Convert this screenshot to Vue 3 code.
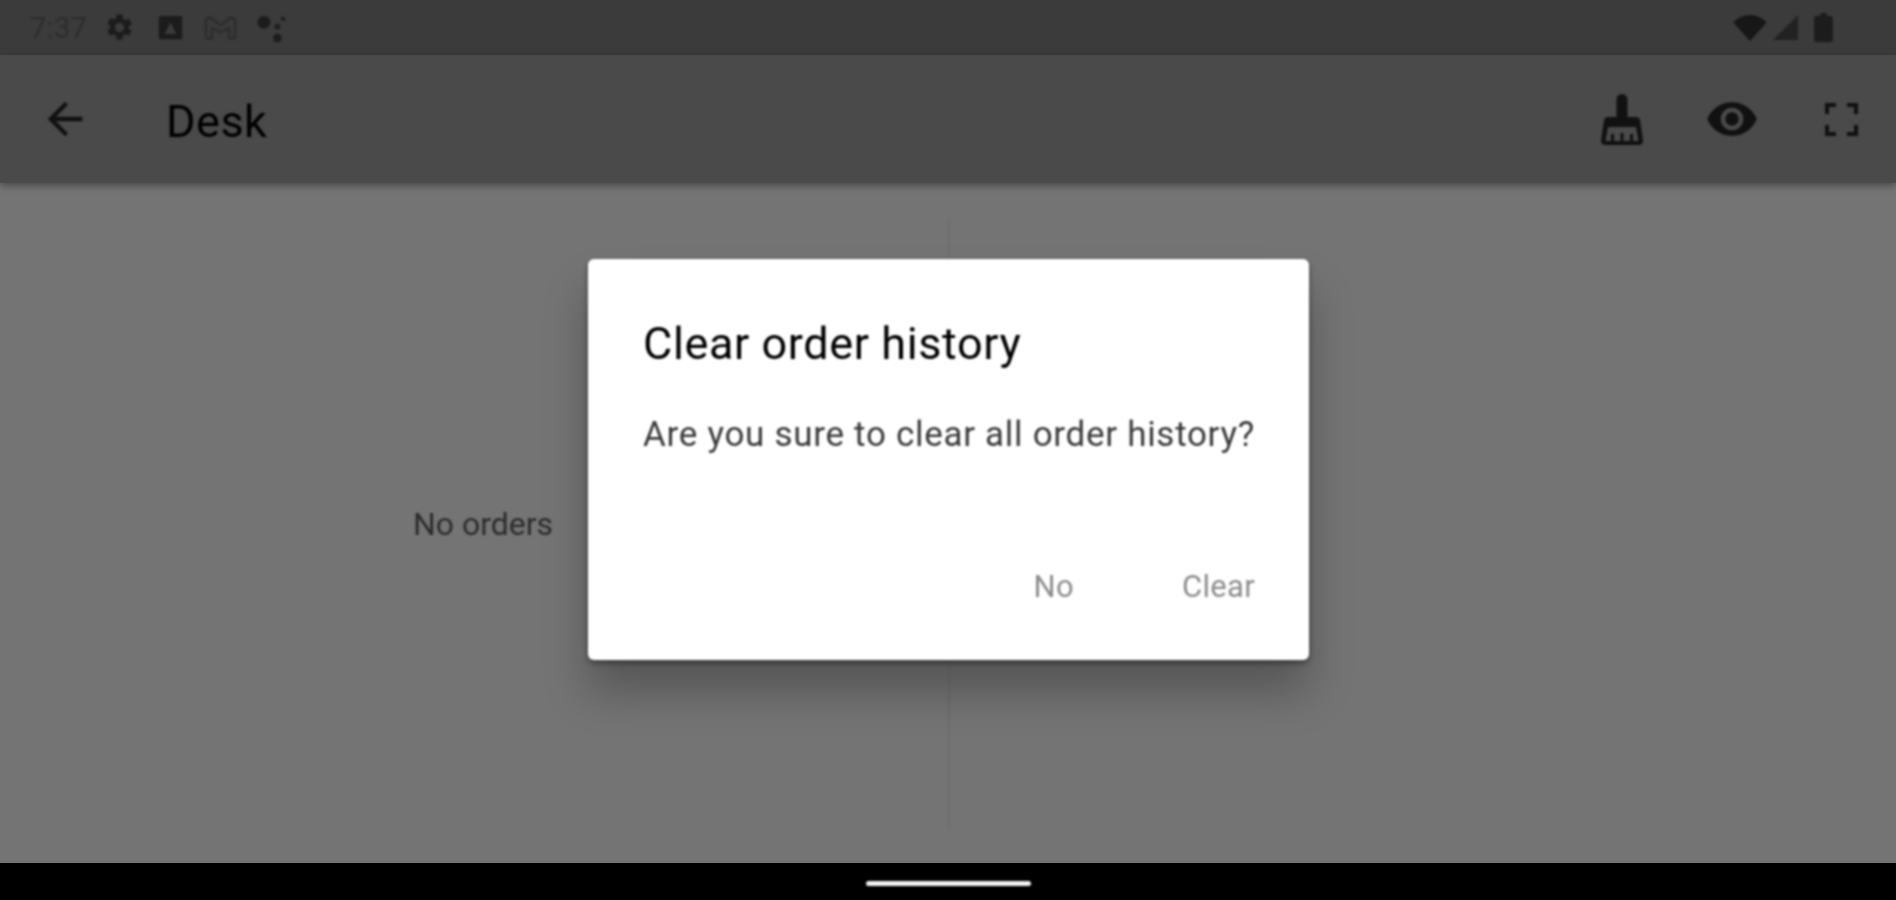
<script setup>
</script>

<template>
  <div class="screen">
    <div class="status">
      <div class="status-left soft">
        <span class="time">7:37</span>
        <svg class="si gear" viewBox="0 0 24 24"><path d="M19.14 12.94c.04-.3.06-.61.06-.94s-.02-.64-.07-.94l2.03-1.58a.49.49 0 0 0 .12-.61l-1.92-3.32a.49.49 0 0 0-.59-.22l-2.39.96c-.5-.38-1.03-.7-1.62-.94l-.36-2.54A.48.48 0 0 0 13.92 2h-3.84a.47.47 0 0 0-.47.41l-.36 2.54c-.59.24-1.13.57-1.62.94l-2.39-.96a.48.48 0 0 0-.59.22L2.74 8.47c-.12.21-.08.47.12.61l2.03 1.58c-.05.3-.09.63-.09.94s.02.64.07.94l-2.03 1.58a.49.49 0 0 0-.12.61l1.92 3.32c.12.22.37.29.59.22l2.39-.96c.5.38 1.03.7 1.62.94l.36 2.54c.05.24.24.41.48.41h3.84c.24 0 .44-.17.47-.41l.36-2.54c.59-.24 1.13-.56 1.62-.94l2.39.96c.22.08.47 0 .59-.22l1.92-3.32a.49.49 0 0 0-.12-.61zM12 15.6A3.6 3.6 0 1 1 12 8.4a3.6 3.6 0 0 1 0 7.2z"/></svg>
        <svg class="si square" viewBox="0 0 24 24"><path fill-rule="evenodd" d="M4 3h16a1 1 0 0 1 1 1v16a1 1 0 0 1-1 1H4a1 1 0 0 1-1-1V4a1 1 0 0 1 1-1zm8 5-4.500 9h9z"/></svg>
        <svg class="si wide" viewBox="0 0 28 24"><path fill="none" stroke="currentColor" stroke-width="1.800" d="M3 18V7c0-3 3-3.500 4.500-2L14 10l6.500-5C22 3.500 25 4 25 7v11c0 1.500-1 2-2 2h-1c-1 0-1.500-1-1.500-2v-6L14 15l-6.500-3v6c0 1-.5 2-1.500 2H5c-1 0-2-.5-2-2z"/></svg>
        <svg class="si dots" viewBox="0 0 24 24"><circle cx="7" cy="8" r="4.500"/><circle cx="16.500" cy="11" r="2"/><circle cx="20.500" cy="5.500" r="1.500"/><circle cx="16.500" cy="19" r="3"/></svg>
      </div>
      <div class="status-right soft">
        <svg class="wifi" viewBox="0 0 36 28"><path d="M0 8C5 3 11 0 18 0s13 3 18 8L18 28z"/></svg>
        <svg class="signal" viewBox="0 0 26 26"><path d="M26 0v26H0z"/></svg>
        <svg class="battery" viewBox="0 0 18 28"><path d="M6 0h6v3h4a2 2 0 0 1 2 2v21a2 2 0 0 1-2 2H2a2 2 0 0 1-2-2V5a2 2 0 0 1 2-2h4z"/></svg>
      </div>
    </div>

    <header class="appbar">
      <svg class="back soft" viewBox="0 0 24 24"><path d="M20 11H7.830l5.590-5.590L12 4l-8 8 8 8 1.410-1.410L7.830 13H20z"/></svg>
      <h1 class="title soft">Desk</h1>
      <div class="actions soft">
        <svg class="broom" viewBox="0 0 42 51"><path fill-rule="evenodd" d="M21 0a5.500 5.500 0 0 1 5.500 5.500V23H35a4 4 0 0 1 4 3.500l3 20a4 4 0 0 1-4 4.500H4a4 4 0 0 1-4-4.500l3-20A4 4 0 0 1 7 23h8.500V5.500A5.500 5.500 0 0 1 21 0zM7 33 4.500 47H10v-7h3v7h6.500v-8h3v8H29v-7h3v7h5.500L35 33z"/></svg>
        <svg class="eye" viewBox="0 0 24 24"><path d="M12 4.500C7 4.500 2.730 7.610 1 12c1.730 4.390 6 7.500 11 7.500s9.270-3.110 11-7.500c-1.730-4.390-6-7.500-11-7.500zM12 17a5 5 0 1 1 0-10 5 5 0 0 1 0 10zm0-8a3 3 0 1 0 0 6 3 3 0 0 0 0-6z"/></svg>
        <svg class="full" viewBox="0 0 33 33"><path d="M0 11V0h11v4H4v7zM22 0h11v11h-4V4h-7zM33 22v11H22v-4h7v-7zM11 33H0V22h4v7h7z"/></svg>
      </div>
    </header>

    <main class="content">
      <section class="panel left soft"><span class="empty">No orders</span></section>
      <section class="panel right soft"></section>
    </main>

    <footer class="navbar"><span class="handle soft"></span></footer>

    <div class="overlay">
      <div class="dialog soft">
        <h2 class="d-title">Clear order history</h2>
        <p class="d-text">Are you sure to clear all order history?</p>
        <div class="d-actions">
          <span class="btn">No</span>
          <span class="btn">Clear</span>
        </div>
      </div>
    </div>
  </div>
</template>

<style>
html, body { margin: 0; background: #000; }
</style>

<style scoped>
.screen {
  position: relative;
  width: 1896px;
  height: 900px;
  display: flex;
  flex-direction: column;
  overflow: hidden;
  font-family: Roboto, "Liberation Sans", sans-serif;
  background: #000;
}
.soft { filter: blur(0.8px); }
svg { fill: currentColor; display: block; }

.status {
  height: 55px;
  flex: none;
  background: #3b3b3b;
  display: flex;
  align-items: center;
  justify-content: space-between;
  padding: 0 63px 0 30px;
  box-sizing: border-box;
  color: #1c1c1c;
}
.status-left { display: flex; align-items: center; }
.time { font-size: 29px; color: #2d2d2d; letter-spacing: .3px; width: 74px; }
.gear { width: 31px; height: 31px; }
.square { width: 31px; height: 31px; margin-left: 20px; }
.wide { width: 37px; height: 32px; margin-left: 16px; color: #2c2c2c; }
.dots { width: 34px; height: 34px; margin-left: 15px; }
.status-right { display: flex; align-items: center; }
.wifi { width: 34px; height: 26px; color: #171717; }
.signal { width: 25px; height: 25px; margin-left: 6px; color: #222; }
.battery { width: 19px; height: 29px; margin-left: 16px; color: #1c1c1c; }

.appbar {
  height: 128px;
  flex: none;
  background: #4a4a4a;
  display: flex;
  align-items: center;
  color: #111;
  box-shadow: 0 3px 7px rgba(0, 0, 0, .35);
  position: relative;
  z-index: 1;
}
.back { width: 52px; height: 52px; margin-left: 39px; }
.title {
  margin: 4px 0 0 75px;
  font-size: 45px;
  font-weight: 400;
  letter-spacing: .5px;
  color: #000;
}
.actions { margin-left: auto; display: flex; align-items: center; padding-right: 38px; }
.broom { width: 42px; height: 51px; }
.eye { width: 54px; height: 54px; margin-left: 62px; }
.full { width: 33px; height: 33px; margin-left: 66px; }

.content {
  flex: 1;
  display: flex;
  background: #747474;
  min-height: 0;
  padding: 38px 0 34px;
}
.panel { display: flex; align-items: center; justify-content: center; }
.left { flex: 0 0 948px; box-sizing: border-box; padding-left: 18px; }
.right { flex: 1; border-left: 2px solid #6e6e6e; }
.empty { font-size: 32px; color: #2c2c2c; margin-top: -2px; }

.navbar {
  height: 37px;
  flex: none;
  background: #000;
  display: flex;
  justify-content: center;
  align-items: center;
}
.handle { width: 165px; height: 5px; border-radius: 3px; background: #f2f2f2; margin-top: 3px; }

.overlay {
  position: absolute;
  top: 55px;
  left: 0;
  right: 0;
  bottom: 37px;
  z-index: 2;
  padding-left: 1px;
  display: flex;
  align-items: center;
  justify-content: center;
}
.dialog {
  width: 721px;
  height: 401px;
  box-sizing: border-box;
  background: #fff;
  border-radius: 6px;
  padding: 60px 54px 0 55px;
  display: flex;
  flex-direction: column;
  box-shadow: 0 32px 44px rgba(0, 0, 0, .26), 0 3px 6px rgba(0, 0, 0, .4);
}
.d-title { margin: 0; font-size: 45px; line-height: 50px; font-weight: 400; letter-spacing: .6px; color: #000; }
.d-text { margin: 46px 0 0; font-size: 35px; line-height: 40px; font-weight: 400; letter-spacing: .7px; color: #3a3a3a; white-space: nowrap; }
.d-actions { margin-top: auto; padding-bottom: 55px; display: flex; justify-content: flex-end; gap: 108px; }
.btn { font-size: 31px; line-height: 36px; font-weight: 400; letter-spacing: .3px; color: #8c8c8c; }
</style>
